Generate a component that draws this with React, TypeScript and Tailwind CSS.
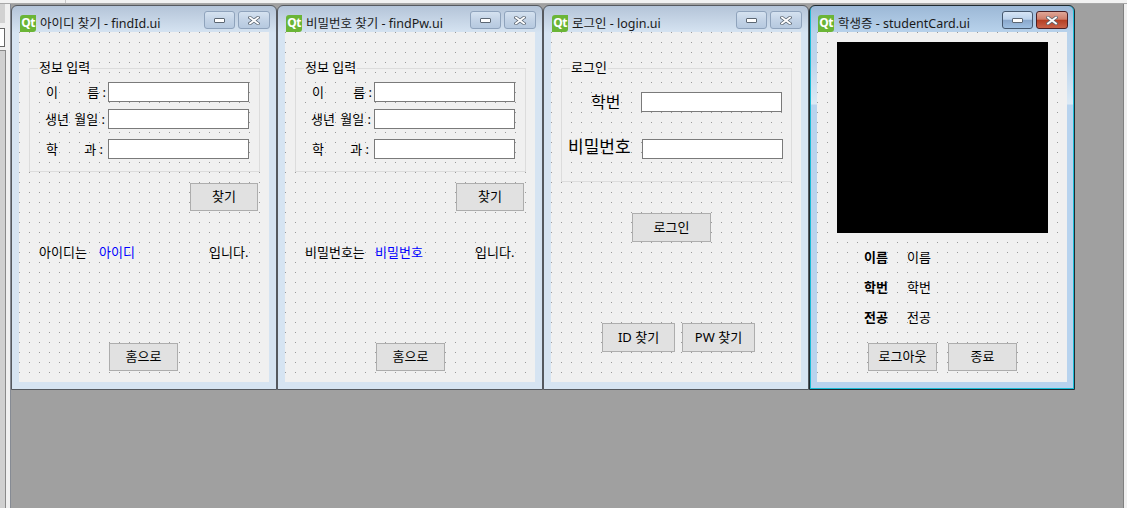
import type { ReactNode } from 'react';

const dots =
    'bg-[#f0f0f0] bg-[conic-gradient(at_1px_1px,transparent_75%,#9a9a9a_0)] bg-[size:10px_10px]';

function QtLogo() {
    return (
        <div className="mt-[9px] flex h-[17px] w-[16px] shrink-0 items-center justify-center rounded-tl-[3px] rounded-br-[3px] bg-[#6bb536] pb-[2px] text-[12px] leading-none font-bold tracking-[-0.5px] text-white">
            Qt
        </div>
    );
}

function TitleButtons({ active }: { active: boolean }) {
    return (
        <div className="mt-[5px] -mr-px ml-auto flex gap-[3px]">
            <div
                className={`flex h-[18px] w-[31px] items-center justify-center rounded-[3px] border ${
                    active
                        ? 'border-[#46596f] bg-[linear-gradient(180deg,#d6e5f5_0%,#bcd3ec_45%,#8aa8cc_52%,#9fc0e2_100%)]'
                        : 'border-[#8fa3bc] bg-[linear-gradient(180deg,#d5e2f0_0%,#c3d3e6_50%,#b6c9df_100%)]'
                }`}
            >
                <div className="h-[5px] w-[11px] rounded-[1px] border border-[#5c6773] bg-white" />
            </div>
            <div
                className={`flex h-[18px] w-[32px] items-center justify-center rounded-[3px] border ${
                    active
                        ? 'border-[#4a1f24] bg-[linear-gradient(180deg,#dfa798_0%,#cf7e6a_45%,#b53f24_52%,#c9634a_100%)]'
                        : 'border-[#8fa3bc] bg-[linear-gradient(180deg,#d5e2f0_0%,#c3d3e6_50%,#b6c9df_100%)]'
                }`}
            >
                <svg width="12" height="9" viewBox="0 0 12 9">
                    <path d="M2 1.5 L10 7.5 M10 1.5 L2 7.5" stroke="#5c6773" strokeWidth="3.4" strokeLinecap="square" />
                    <path d="M2 1.5 L10 7.5 M10 1.5 L2 7.5" stroke="#ffffff" strokeWidth="1.8" strokeLinecap="square" />
                </svg>
            </div>
        </div>
    );
}

function Window({ title, active = false, children }: { title: string; active?: boolean; children: ReactNode }) {
    return (
        <div
            className={`flex h-[385px] w-[266px] flex-col rounded-t-[6px] border px-[7px] pb-[7px] ${
                active
                    ? 'border-[#1e2a30] bg-[linear-gradient(180deg,#9cb8d6_0,#b9d3ec_27px,#bcd4ec_55px,#dbe9f5_98px,#b8d3ee_99px)] shadow-[inset_1px_-1px_0_#19bcd6,inset_-1px_0_0_#19bcd6]'
                    : 'border-[#55595f] bg-[linear-gradient(180deg,#b4c4d8_0,#d6e4f2_27px)]'
            }`}
        >
            <div className="flex h-[26px] shrink-0 items-start">
                <div className="ml-px">
                    <QtLogo />
                </div>
                <span className="mt-[9px] ml-[4px] text-[12.5px] leading-[17px] whitespace-nowrap text-[#1a1a1a]">{title}</span>
                <TitleButtons active={active} />
            </div>
            <div className={`h-[350px] w-[250px] ${dots}`}>{children}</div>
        </div>
    );
}

function PushButton({ label, className }: { label: string; className: string }) {
    return (
        <button
            type="button"
            className={`block border border-[#adadad] bg-[#e1e1e1] text-[13px] text-black ${className}`}
        >
            {label}
        </button>
    );
}

function TextBox() {
    return <div className="h-[20px] w-[141px] border border-[#7a7a7a] bg-white" />;
}

function GroupBox({ title, className, children }: { title: string; className: string; children: ReactNode }) {
    return (
        <div className={`relative ml-[10px] w-[231px] border border-[#dcdcdc] ${className}`}>
            <span className="absolute -top-[10px] left-[8px] bg-[#f0f0f0] px-[1px] text-[13px] leading-[16px] text-black">
                {title}
            </span>
            {children}
        </div>
    );
}

function FieldRow({ first, last, className, padding }: { first: string; last: string; className: string; padding: string }) {
    return (
        <div className={`flex items-center ${className}`}>
            <div className={`flex w-[78px] justify-between text-[13px] leading-[20px] whitespace-pre text-black ${padding}`}>
                <span>{first}</span>
                <span>{last}</span>
            </div>
            <TextBox />
        </div>
    );
}

function FindForm({
    prefix,
    value,
    prefixWidth,
    valueWidth,
    homeMargin,
}: {
    prefix: string;
    value: string;
    prefixWidth: string;
    valueWidth: string;
    homeMargin: string;
}) {
    return (
        <div className="pt-[36px]">
            <GroupBox title="정보 입력" className="h-[104px] pt-[13px]">
                <FieldRow first="이" last="름 :" padding="pl-[16px] pr-[2px]" className="" />
                <FieldRow first="생년" last="월일 :" padding="pl-[15px] pr-[3px]" className="mt-[7px]" />
                <FieldRow first="학" last="과 :" padding="pl-[16px] pr-[5px]" className="mt-[10px]" />
            </GroupBox>
            <PushButton label="찾기" className="mt-[11px] ml-[171px] h-[28px] w-[68px]" />
            <div className="mt-[33px] flex pl-[20px] text-[13px] leading-[16px]">
                <span className={`text-black ${prefixWidth}`}>{prefix}</span>
                <span className={`text-[#0000ff] ${valueWidth}`}>{value}</span>
                <span className="text-black">입니다.</span>
            </div>
            <PushButton label="홈으로" className={`mt-[83px] h-[28px] w-[69px] ${homeMargin}`} />
        </div>
    );
}

function LoginForm() {
    return (
        <div className="pt-[36px]">
            <GroupBox title="로그인" className="h-[114px] pt-[23px]">
                <div className="flex items-center">
                    <span className="w-[79px] pl-[29px] text-[16px] leading-[20px] text-black">학번</span>
                    <TextBox />
                </div>
                <div className="mt-[27px] flex items-center">
                    <span className="w-[80px] pb-[4px] pl-[6px] text-[17px] leading-[16px] whitespace-nowrap text-black">비밀번호</span>
                    <TextBox />
                </div>
            </GroupBox>
            <PushButton label="로그인" className="mt-[31px] ml-[81px] h-[29px] w-[79px]" />
            <div className="mt-[81px] ml-[51px] flex gap-[7px]">
                <PushButton label="ID 찾기" className="h-[29px] w-[73px]" />
                <PushButton label="PW 찾기" className="h-[29px] w-[73px]" />
            </div>
        </div>
    );
}

function InfoRow({ label, className }: { label: string; className: string }) {
    return (
        <div className={`flex pl-[47px] text-[13px] leading-[16px] text-black ${className}`}>
            <span className="w-[43px] font-bold">{label}</span>
            <span>{label}</span>
        </div>
    );
}

function StudentCard() {
    return (
        <div className="pt-[10px]">
            <div className="ml-[20px] h-[191px] w-[211px] bg-black" />
            <InfoRow label="이름" className="mt-[16px]" />
            <InfoRow label="학번" className="mt-[14px]" />
            <InfoRow label="전공" className="mt-[14px]" />
            <div className="mt-[18px] ml-[51px] flex gap-[11px]">
                <PushButton label="로그아웃" className="h-[28px] w-[69px]" />
                <PushButton label="종료" className="h-[28px] w-[69px]" />
            </div>
        </div>
    );
}

export default function App() {
    return (
        <div className="flex h-[508px] w-[1127px] flex-col overflow-hidden bg-[#a0a0a0] font-['Noto_Sans','Noto_Sans_CJK_KR',sans-serif]">
            <div className="h-[4px] shrink-0 border-b border-[#a8a8a8] bg-[#f2f2f2]">
                <div className="ml-[65px] h-full w-px bg-[#c8c8c8]" />
            </div>
            <div className="flex min-h-0 flex-1">
                <div className="flex w-[11px] shrink-0 flex-col border-r border-[#868b94] bg-[#f0f0f0]">
                    <div className="h-[19px] w-[5px] bg-[#d2d2d2]" />
                    <div className="mt-[5px] h-[19px] w-[5px] border-y border-r border-[#666666] bg-white" />
                    <div className="mt-[3px] w-[6px] flex-1 border-t border-r border-[#8a8a8a] bg-[#d0d0d0]" />
                </div>
                <div className="flex flex-1 pt-px">
                    <div className="flex items-start">
                        <Window title="아이디 찾기 - findId.ui">
                            <FindForm prefix="아이디는" value="아이디" prefixWidth="w-[60px]" valueWidth="w-[110px]" homeMargin="ml-[90px]" />
                        </Window>
                        <Window title="비밀번호 찾기 - findPw.ui">
                            <FindForm prefix="비밀번호는" value="비밀번호" prefixWidth="w-[70px]" valueWidth="w-[100px]" homeMargin="ml-[91px]" />
                        </Window>
                        <Window title="로그인 - login.ui">
                            <LoginForm />
                        </Window>
                        <Window title="학생증 - studentCard.ui" active>
                            <StudentCard />
                        </Window>
                    </div>
                </div>
                <div className="w-[4px] shrink-0 border-l border-[#808080] bg-[#f0f0f0]" />
            </div>
        </div>
    );
}
